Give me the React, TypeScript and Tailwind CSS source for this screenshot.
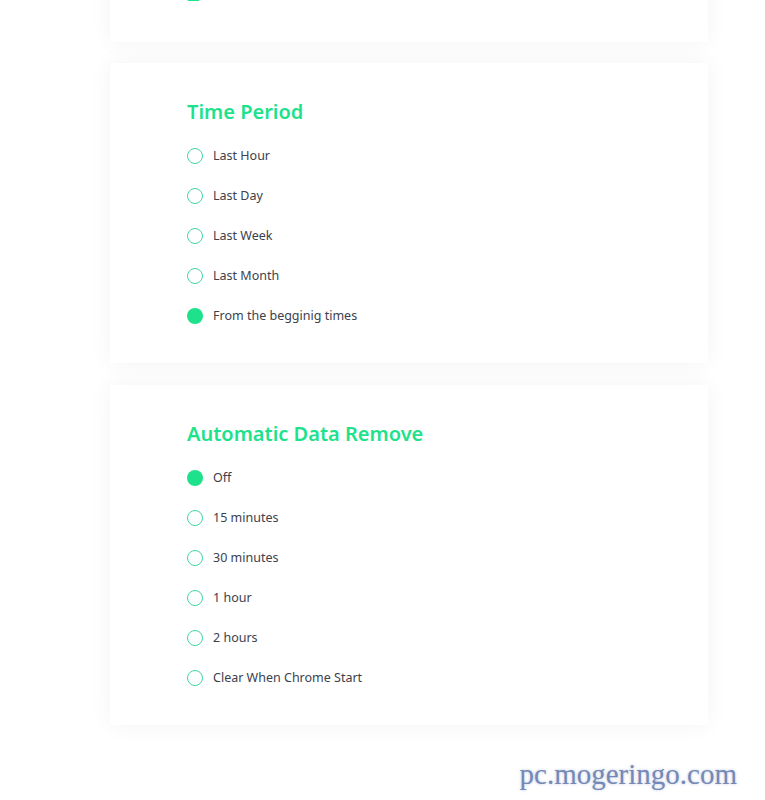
import React from "react";

function Radio({ checked, label }: { checked?: boolean; label: string }) {
  return (
    <div className="flex h-[40px] items-center">
      {checked ? (
        <span className="block h-[16px] w-[16px] rounded-full bg-[#1de28b]" />
      ) : (
        <span className="block h-[16px] w-[16px] rounded-full border-[1.5px] border-[#3fd6a0]" />
      )}
      <span className="ml-[10px] text-[12.5px] text-[#3b414d]">{label}</span>
    </div>
  );
}

function Card({ title, items, selected, extra }: { title: string; items: string[]; selected: number; extra?: string }) {
  return (
    <div className={`bg-white pt-[35px] pb-[27px] pl-[77px] shadow-[0_0_22px_rgba(0,0,0,0.05)] ${extra ?? ""}`}>
      <h2 className="h-[28px] text-[20px] font-semibold leading-[28px] text-[#1de28b]">{title}</h2>
      <div className="mt-[10px] flex flex-col">
        {items.map((it, i) => (
          <Radio key={it} label={it} checked={i === selected} />
        ))}
      </div>
    </div>
  );
}

export default function App() {
  return (
    <div
      className="min-h-[800px] overflow-hidden bg-white"
      style={{ fontFamily: '"Noto Sans", "Open Sans", sans-serif' }}
    >
      <div className="ml-[110px] w-[598px] flex flex-col gap-[21px]">
        <div className="-mt-[26px] bg-white pb-[28px] pl-[77px] shadow-[0_0_22px_rgba(0,0,0,0.05)]">
          <div className="flex h-[40px] items-center">
            <span className="block h-[13px] w-[13px] rounded-[2px] bg-[#1de28b]" />
            <span className="ml-[12px] text-[12.5px] text-[#3b414d]">Show FAQ</span>
          </div>
        </div>
        <Card
          title="Time Period"
          items={["Last Hour", "Last Day", "Last Week", "Last Month", "From the begginig times"]}
          selected={4}
        />
        <Card
          title="Automatic Data Remove"
          items={["Off", "15 minutes", "30 minutes", "1 hour", "2 hours", "Clear When Chrome Start"]}
          selected={0}
          extra="mt-[1px]"
        />
      </div>
      <div
        className="mt-[34px] pr-[28px] text-right text-[29px] leading-[30px] text-[#7489b5]"
        style={{ fontFamily: '"Liberation Serif", serif', textShadow: "0 0 3px rgba(120,140,190,0.5)" }}
      >
        pc.mogeringo.com
      </div>
    </div>
  );
}
